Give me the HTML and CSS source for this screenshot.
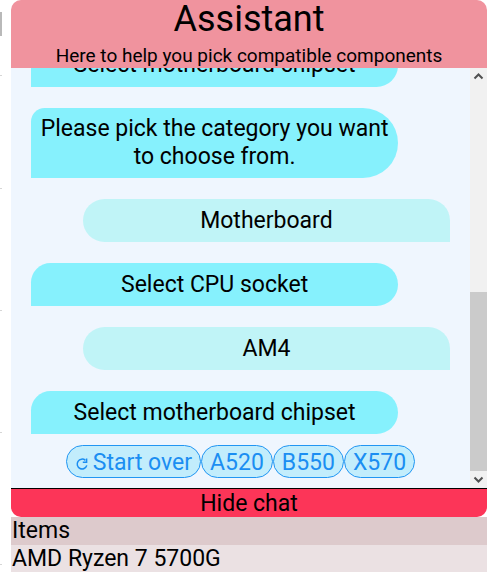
FILE: index.html
```html
<!DOCTYPE html>
<html lang="en">
<head>
<meta charset="utf-8">
<title>Assistant</title>
<link rel="stylesheet" href="styles.css">
</head>
<body>
<div class="page">
  <div class="gutter">
    <span class="mark bar"></span>
    <span class="mark dot d1"></span>
    <span class="mark dot d2"></span>
    <span class="mark dot d3"></span>
    <span class="mark dot d4"></span>
    <span class="mark dot d5"></span>
  </div>
  <main class="main">
    <section class="chat">
      <header class="chat-head">
        <h1 class="chat-title">Assistant</h1>
        <p class="chat-sub">Here to help you pick compatible components</p>
      </header>
      <div class="chat-body">
        <div class="chat-scroll">
          <div class="thread">
            <div class="bubble bot tall">Please pick the category you want to choose from.</div>
            <div class="bubble user">CPU</div>
            <div class="bubble bot">Select CPU brand</div>
            <div class="bubble user">AMD</div>
            <div class="bubble bot">Select CPU</div>
            <div class="bubble user">AMD Ryzen 7 5700G</div>
            <div class="bubble bot">Select motherboard chipset</div>
            <div class="bubble bot tall">Please pick the category you want to choose from.</div>
            <div class="bubble user">Motherboard</div>
            <div class="bubble bot">Select CPU socket</div>
            <div class="bubble user">AM4</div>
            <div class="bubble bot">Select motherboard chipset</div>
            <div class="chips">
              <button class="chip" type="button"><svg class="chip-icon" viewBox="0 0 14 14" width="14" height="14" aria-hidden="true"><path d="M11.8 8.4A4.9 4.9 0 1 1 10.4 3.4" fill="none" stroke="currentColor" stroke-width="1.5"/><path d="M11.6 1.4v3.8H7.8" fill="none" stroke="currentColor" stroke-width="1.5"/></svg>Start over</button><button class="chip" type="button">A520</button><button class="chip" type="button">B550</button><button class="chip" type="button">X570</button>
            </div>
          </div>
        </div>
        <div class="scrollbar" aria-hidden="true">
          <div class="sb-btn"><svg viewBox="0 0 17 17" width="17" height="17"><path d="M4.5 10.5l4-4 4 4" fill="none" stroke="#505050" stroke-width="2"/></svg></div>
          <div class="sb-track"><div class="sb-thumb"></div></div>
          <div class="sb-btn"><svg viewBox="0 0 17 17" width="17" height="17"><path d="M4.5 6.5l4 4 4-4" fill="none" stroke="#505050" stroke-width="2"/></svg></div>
        </div>
      </div>
      <button class="chat-toggle" type="button">Hide chat</button>
    </section>
    <div class="items">
      <div class="items-head">Items</div>
      <div class="items-row">AMD Ryzen 7 5700G</div>
    </div>
  </main>
</div>
</body>
</html>
```

FILE: styles.css
```css
* {
  box-sizing: border-box;
}

html,
body {
  margin: 0;
  background: #ffffff;
}

body {
  font-family: Roboto, "Noto Sans", "Liberation Sans", sans-serif;
  color: #000000;
}

.page {
  display: flex;
  width: 489px;
  height: 577px;
  overflow: hidden;
}

.gutter {
  width: 11px;
  flex: none;
  display: flex;
  flex-direction: column;
  align-items: flex-start;
}

.mark {
  display: block;
  width: 2px;
  flex: none;
}

.bar {
  height: 24px;
  margin-top: 12px;
  background: #b9b9b9;
}

.dot {
  height: 1px;
  background: #d6d6d6;
}

.d1 { margin-top: 39px; }
.d2 { margin-top: 112px; }
.d3 { margin-top: 121px; }
.d4 { margin-top: 121px; }
.d5 { margin-top: 131px; }

.main {
  width: 476px;
  flex: none;
}

.chat {
  display: flex;
  flex-direction: column;
  height: 517px;
  border-radius: 10px;
  overflow: hidden;
}

.chat-head {
  flex: none;
  height: 68px;
  background: #f0939e;
  text-align: center;
}

.chat-title {
  margin: 0;
  font-size: 36px;
  font-weight: 400;
  line-height: 38px;
}

.chat-sub {
  margin: 0;
  padding-top: 6px;
  font-size: 19px;
  line-height: 24px;
}

.chat-body {
  flex: 1;
  min-height: 0;
  display: flex;
  background: #eff6fe;
}

.chat-scroll {
  flex: 1;
  min-width: 0;
  overflow: hidden;
  display: flex;
  flex-direction: column-reverse;
}

.thread {
  flex: none;
  padding: 20px 0 10px;
}

.bubble {
  width: 80%;
  margin-top: 21px;
  padding: 7.7px 4px;
  font-size: 23px;
  line-height: 1.2;
  text-align: center;
}

.bubble:first-child {
  margin-top: 0;
}

.bot {
  margin-left: 20px;
  background: #86f1fd;
  border-radius: 20px 22px 22px 0;
}

.bot.tall {
  border-radius: 14px 36px 36px 0;
}

.user {
  margin-left: auto;
  margin-right: 20px;
  background: #c0f4f7;
  border-radius: 22px 22px 0 22px;
}

.chips {
  display: flex;
  justify-content: center;
  margin-top: 11px;
}

.chip {
  display: flex;
  align-items: center;
  height: 33px;
  padding: 1px 8px 0;
  font-family: inherit;
  font-size: 23px;
  color: #1b8ef2;
  background: #c2edfc;
  border: 1px solid #2196f3;
  border-radius: 17px;
}

.chip-icon {
  width: 14px;
  height: 14px;
  margin-right: 4px;
  margin-top: 4px;
}

.scrollbar {
  flex: none;
  width: 17px;
  display: flex;
  flex-direction: column;
  background: #f1f1f1;
}

.sb-btn {
  flex: none;
  height: 17px;
}

.sb-btn svg {
  display: block;
}

.sb-track {
  flex: 1;
  display: flex;
  flex-direction: column;
  justify-content: flex-end;
}

.sb-thumb {
  height: 179px;
  background: #cbcbcb;
}

.chat-toggle {
  flex: none;
  height: 29px;
  padding: 1px 0 0;
  border: 0;
  border-top: 1px solid #000000;
  background: #fc3558;
  font-family: inherit;
  font-size: 23px;
  line-height: 27px;
  color: #000000;
}

.items-head {
  padding-left: 1px;
  height: 28px;
  line-height: 28px;
  font-size: 23px;
  background: #ddcacc;
}

.items-row {
  padding-left: 1px;
  height: 27px;
  line-height: 27px;
  font-size: 23px;
  background: #ebe1e3;
}
```
